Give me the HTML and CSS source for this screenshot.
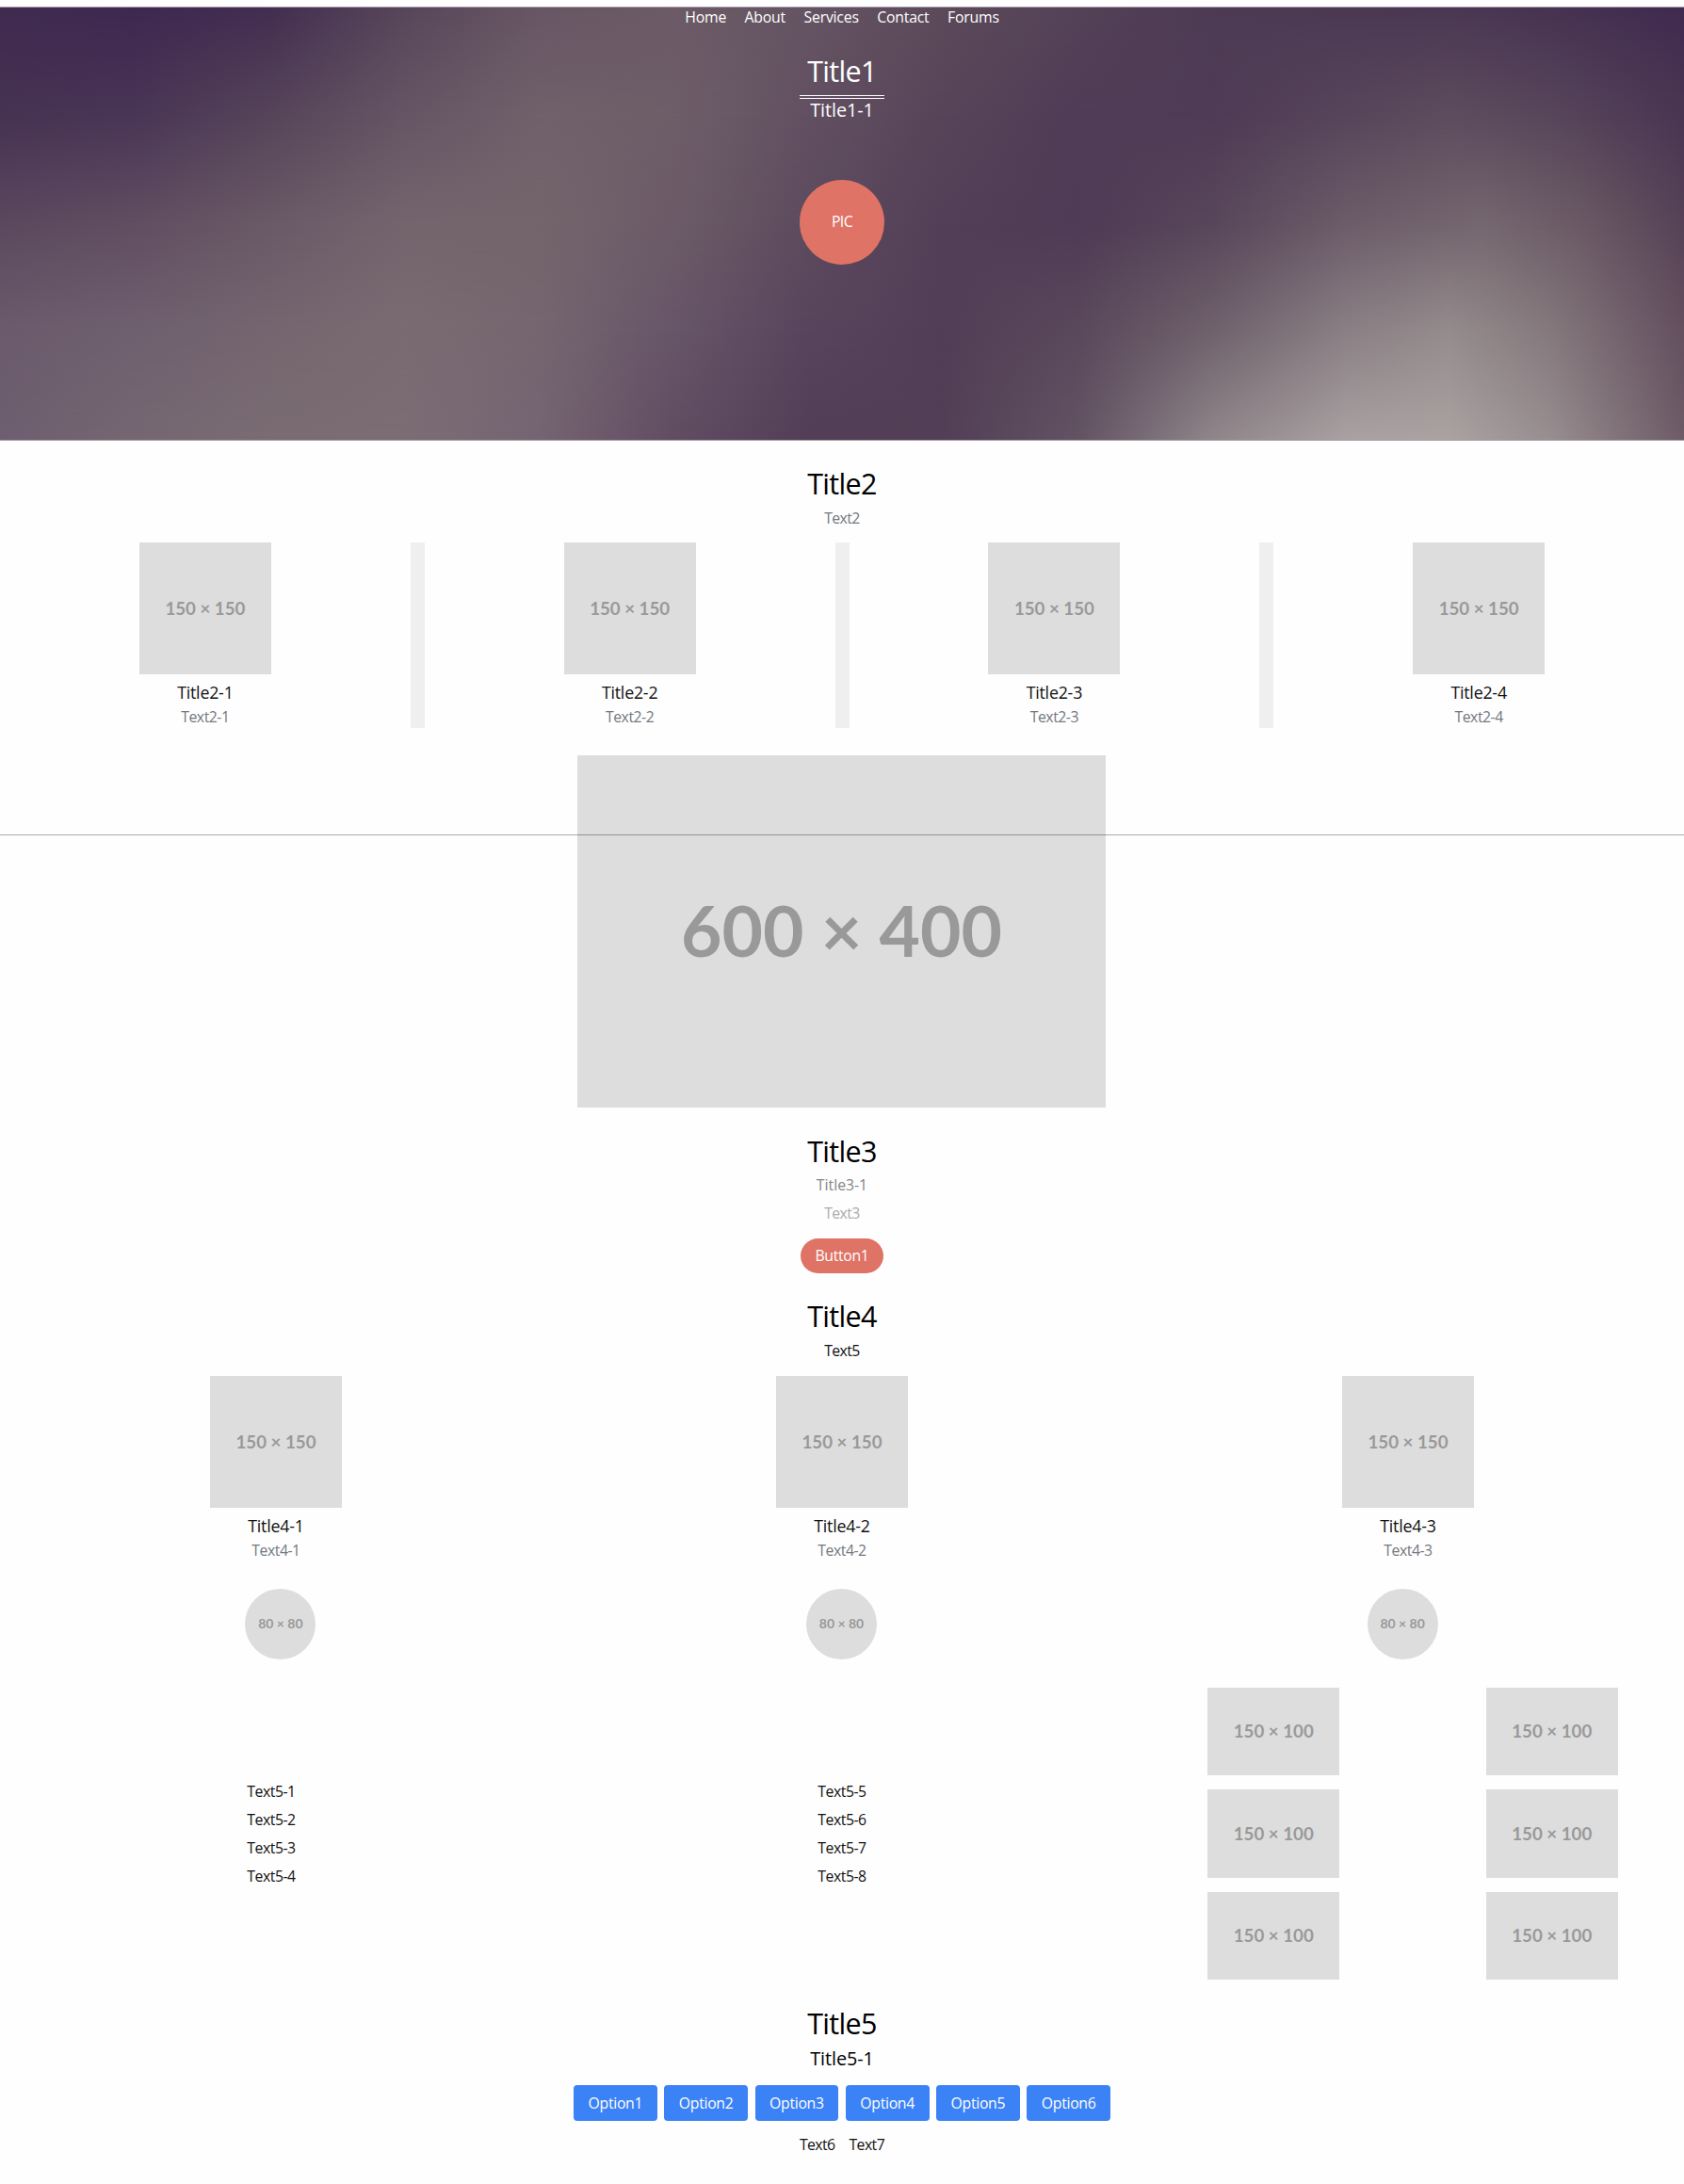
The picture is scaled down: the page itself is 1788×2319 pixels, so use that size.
FILE: index.html
```html
<!DOCTYPE html>
<html lang="en">
<head>
<meta charset="utf-8">
<title>Title1</title>
<link rel="stylesheet" href="styles.css">
</head>
<body>
<header class="hero">
  <div class="wash wash-1"></div><div class="wash wash-2"></div><div class="wash wash-3"></div><div class="wash wash-4"></div><div class="wash wash-5"></div>
  <nav class="nav"><a>Home</a><a>About</a><a>Services</a><a>Contact</a><a>Forums</a></nav>
  <h1 class="title hero-title">Title1</h1>
  <div class="rule"></div>
  <h2 class="subtitle">Title1-1</h2>
  <div class="pic">PIC</div>
</header>

<section class="features">
  <h2 class="title">Title2</h2>
  <p class="text muted lead">Text2</p>
  <div class="feature-grid">
    <article class="card"><div class="ph square">150 × 150</div><h3 class="card-title">Title2-1</h3><p class="text muted">Text2-1</p></article>
    <article class="card"><div class="ph square">150 × 150</div><h3 class="card-title">Title2-2</h3><p class="text muted">Text2-2</p></article>
    <article class="card"><div class="ph square">150 × 150</div><h3 class="card-title">Title2-3</h3><p class="text muted">Text2-3</p></article>
    <article class="card"><div class="ph square">150 × 150</div><h3 class="card-title">Title2-4</h3><p class="text muted">Text2-4</p></article>
  </div>
</section>

<section class="showcase">
  <div class="ph banner">600 × 400</div>
  <div class="strike"></div>
</section>

<section class="intro">
  <h2 class="title">Title3</h2>
  <p class="text wide gray lead">Title3-1</p>
  <p class="text light">Text3</p>
  <a class="pill">Button1</a>
</section>

<section class="team">
  <h2 class="title">Title4</h2>
  <p class="text lead">Text5</p>
  <div class="team-grid">
    <article class="card"><div class="ph square">150 × 150</div><h3 class="card-title">Title4-1</h3><p class="text muted">Text4-1</p></article>
    <article class="card"><div class="ph square">150 × 150</div><h3 class="card-title">Title4-2</h3><p class="text muted">Text4-2</p></article>
    <article class="card"><div class="ph square">150 × 150</div><h3 class="card-title">Title4-3</h3><p class="text muted">Text4-3</p></article>
  </div>
  <div class="avatars">
    <div class="ph avatar">80 × 80</div><div class="ph avatar">80 × 80</div><div class="ph avatar">80 × 80</div>
  </div>
</section>

<section class="links">
  <ul class="list"><li>Text5-1</li><li>Text5-2</li><li>Text5-3</li><li>Text5-4</li></ul>
  <ul class="list"><li>Text5-5</li><li>Text5-6</li><li>Text5-7</li><li>Text5-8</li></ul>
  <div class="gallery">
    <div class="ph thumb">150 × 100</div><div class="ph thumb">150 × 100</div>
    <div class="ph thumb">150 × 100</div><div class="ph thumb">150 × 100</div>
    <div class="ph thumb">150 × 100</div><div class="ph thumb">150 × 100</div>
  </div>
</section>

<footer class="footer">
  <h2 class="title">Title5</h2>
  <h3 class="subtitle">Title5-1</h3>
  <div class="options"><a class="option">Option1</a><a class="option">Option2</a><a class="option">Option3</a><a class="option">Option4</a><a class="option">Option5</a><a class="option">Option6</a></div>
  <div class="foot-text"><span>Text6</span><span>Text7</span></div>
</footer>
</body>
</html>
```
FILE: styles.css
```css
* { box-sizing: border-box; }
body {
  margin: 0;
  padding-top: 7px;
  background: #fefefe;
  color: #111;
  font: 15.8px/22.5px "Open Sans", "Noto Sans", sans-serif;
  letter-spacing: -0.037em;
}
h1, h2, h3, p, ul { margin: 0; padding: 0; font-weight: 400; }
ul { list-style: none; }

.title { font-size: 30.5px; line-height: 45px; letter-spacing: -0.022em; color: #000; }
.subtitle { font-size: 19.8px; line-height: 27px; font-weight: 500; letter-spacing: -0.003em; color: #000; }
.text { line-height: 22.5px; }
.wide { letter-spacing: 0; }
.lead { margin-top: 2.5px; }
.muted { color: #737880; }
.gray { color: #858585; }
.light { color: #ababab; }

/* Hero: five rows of colour, each fading into the next */
.hero {
  position: relative;
  height: 461px;
  display: flex;
  flex-direction: column;
  align-items: center;
  color: #fff;
  border-top: 1px solid #a89dab;
  border-bottom: 1px solid #a89dab;
}
.hero > * { position: relative; }
.hero > .wash { position: absolute; inset: 0; }
.wash-1 { background: linear-gradient(90deg, #402b50 0%, #3f2850 8%, #432d51 16%, #57465a 24%, #685664 32%, #6c5b66 40%, #655463 48%, #5c4a5a 56%, #544258 64%, #4d3a53 72%, #4b3853 80%, #4a3652 88%, #402b50 100%); }
.wash-2 {
  background: linear-gradient(90deg, #463252 0%, #493556 8%, #564459 16%, #665565 24%, #70616a 32%, #6e5e68 40%, #625062 48%, #574459 56%, #503c56 64%, #4f3b55 72%, #57455b 80%, #5d4c5e 86%, #58465b 92%, #4a3552 100%);
  -webkit-mask-image: linear-gradient(transparent 0%, #000 25%);
  mask-image: linear-gradient(transparent 0%, #000 25%);
}
.wash-3 {
  background: linear-gradient(90deg, #5b485e 0%, #614e61 8%, #6a5967 16%, #74656d 24%, #74656c 32%, #6c5b67 40%, #5d4b5e 48%, #533f57 56%, #4f3b55 64%, #58465b 72%, #6c5c69 80%, #75676f 88%, #6a5964 94%, #564257 100%);
  -webkit-mask-image: linear-gradient(transparent 25%, #000 50%);
  mask-image: linear-gradient(transparent 25%, #000 50%);
}
.wash-4 {
  background: linear-gradient(90deg, #6b5b6c 0%, #6f6070 8%, #75666f 16%, #7a6b72 24%, #75666f 32%, #675569 40%, #58445c 48%, #523e56 56%, #5a485c 64%, #70626c 72%, #8b8085 80%, #958c8d 86%, #85797d 92%, #64505f 100%);
  -webkit-mask-image: linear-gradient(transparent 50%, #000 75%);
  mask-image: linear-gradient(transparent 50%, #000 75%);
}
.wash-5 {
  background: linear-gradient(90deg, #6d5e70 0%, #756771 8%, #7a6c72 16%, #7c6d75 24%, #756472 32%, #614d62 40%, #523e56 48%, #523f56 56%, #625363 64%, #90868a 72%, #a9a1a2 80%, #aaa3a2 86%, #988e90 92%, #6d5b66 100%);
  -webkit-mask-image: linear-gradient(transparent 75%, #000 100%);
  mask-image: linear-gradient(transparent 75%, #000 100%);
}
.nav { display: flex; gap: 19.5px; margin-top: -1px; font-weight: 500; letter-spacing: -0.013em; }
.hero-title { color: #fff; margin-top: 23.5px; }
.rule { width: 90px; height: 4px; margin-top: 3px; border-top: 1px solid #fff; border-bottom: 1px solid #fff; }
.hero .subtitle { color: #fff; margin-top: -2px; }
.pic {
  width: 90px;
  height: 90px;
  margin-top: 60.5px;
  border-radius: 50%;
  background: #df7366;
  display: grid;
  place-items: center;
}

.features { padding-top: 23px; text-align: center; }
.feature-grid { display: grid; grid-template-columns: repeat(4, 1fr); gap: 15px; margin-top: 15px; background: #efefef; }
.card { display: flex; flex-direction: column; align-items: center; background: #fefefe; }
.card-title { font-size: 17.8px; line-height: 27px; margin-top: 6px; letter-spacing: -0.012em; }
.card .text { margin-top: 1px; letter-spacing: -0.03em; }

/* Placeholder pictures */
.ph {
  display: grid;
  place-items: center;
  background: #ddd;
  color: #999;
  font-family: Lato, sans-serif;
  font-weight: 700;
  font-size: 18.7px;
  letter-spacing: 0;
}
.square { width: 140px; height: 140px; }
.banner { width: 561px; height: 374px; font-size: 75px; line-height: 90px; padding-bottom: 4px; }
.avatar { width: 75px; height: 75px; border-radius: 50%; font-size: 14px; }
.thumb { width: 140px; height: 93.5px; }

.showcase { position: relative; display: flex; justify-content: center; margin-top: 29.9px; padding-right: 1px; }
.strike { position: absolute; left: 0; right: 0; top: 83.6px; height: 1px; background: rgba(0, 0, 0, .33); }

.intro { display: flex; flex-direction: column; align-items: center; padding-top: 23.6px; }
.intro .light { margin-top: 7.5px; }
.pill { margin-top: 15px; width: 88px; height: 37.5px; line-height: 37.5px; text-align: center; border-radius: 19px; background: #df7366; color: #fff; letter-spacing: -0.02em; }

.team { padding-top: 23px; text-align: center; }
.team-grid { display: grid; grid-template-columns: repeat(3, 1fr); gap: 15px; margin-top: 15.5px; }
.avatars { display: grid; grid-template-columns: repeat(3, 1fr); justify-items: center; margin-top: 29.5px; padding-right: 1px; }

.links { display: grid; grid-template-columns: repeat(3, 1fr); gap: 30px; align-items: center; margin-top: 30px; }
.list { display: grid; gap: 7.5px; justify-content: center; letter-spacing: -0.03em; }
.gallery { display: grid; grid-template-columns: 1fr 1fr; gap: 15px; justify-items: center; }

.footer { display: flex; flex-direction: column; align-items: center; padding-top: 23.5px; }
.footer .subtitle { margin-top: 1px; }
.options { display: flex; gap: 7.5px; margin-top: 15.5px; }
.option { width: 88.75px; height: 37.5px; line-height: 38px; text-align: center; border-radius: 4px; background: #3b82f6; color: #fff; letter-spacing: -0.02em; }
.foot-text { display: flex; gap: 15px; margin-top: 14.5px; }
```
